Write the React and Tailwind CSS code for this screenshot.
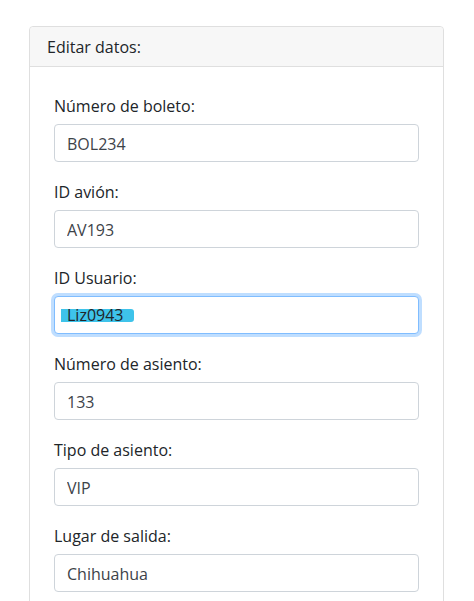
const fields = [
  { label: "Número de boleto:", value: "BOL234" },
  { label: "ID avión:", value: "AV193" },
  { label: "ID Usuario:", value: "Liz0943", focused: true },
  { label: "Número de asiento:", value: "133" },
  { label: "Tipo de asiento:", value: "VIP" },
  { label: "Lugar de salida:", value: "Chihuahua" },
];

function Field({ label, value, focused }) {
  return (
    <div className="mb-4">
      <label className="block pt-[2px] mb-[6px] text-base leading-6 text-[#212529]">{label}</label>
      {focused ? (
        <div className="h-[38px] flex items-center pl-3 pr-3 pt-[1px] rounded border border-[#80bdff] bg-white shadow-[0_0_0_3px_rgba(0,123,255,0.25)] text-base text-[#212529]">
          <span className="-ml-[6px] pl-[6px] pr-[11px] leading-[13px] bg-[#3ec3ea] rounded-r-[3px]">
            {value}
          </span>
        </div>
      ) : (
        <input
          className="block w-full h-[38px] px-3 pt-[1px] rounded border border-[#ced4da] bg-white text-base text-[#3d4349] outline-none"
          defaultValue={value}
          readOnly
        />
      )}
    </div>
  );
}

export default function App() {
  return (
    <div
      className="min-h-screen bg-white pl-[29px] pt-[26px]"
      style={{ fontFamily: '"Open Sans", "Noto Sans", sans-serif' }}
    >
      <div className="w-[415px] border border-[#dfdfdf] rounded bg-white">
        <div className="h-[40px] flex items-center px-[17px] pt-[1px] bg-[#f7f7f7] border-b border-[#dfdfdf] rounded-t text-base text-[#212529]">
          Editar datos:
        </div>
        <div className="px-6 pt-[25px] pb-2">
          {fields.map((f) => (
            <Field key={f.label} {...f} />
          ))}
        </div>
      </div>
    </div>
  );
}
